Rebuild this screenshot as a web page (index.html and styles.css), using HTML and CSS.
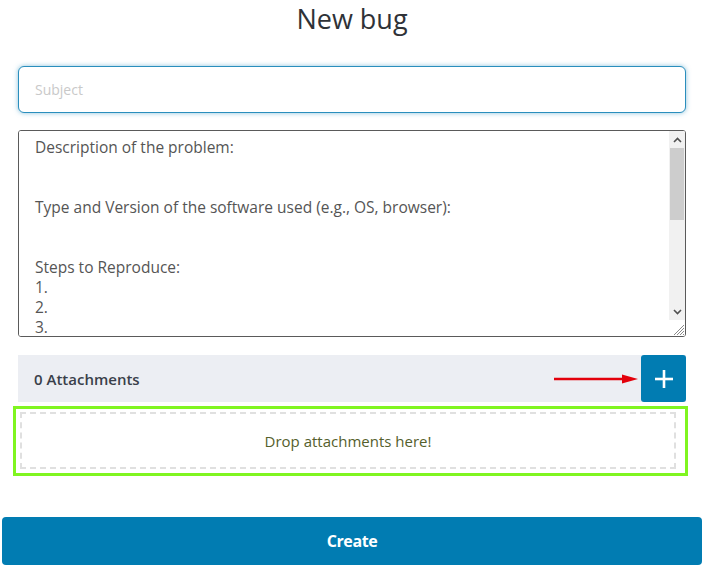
FILE: index.html
```html
<!DOCTYPE html>
<html>
<head>
<meta charset="utf-8">
<link rel="stylesheet" href="styles.css">
</head>
<body>
<div class="modal">
  <h1 class="title">New bug</h1>
  <div class="field">
    <input class="subject" type="text" placeholder="Subject" autofocus>
  </div>
  <div class="field">
    <div class="desc-box">
      <textarea class="desc">Description of the problem:


Type and Version of the software used (e.g., OS, browser):


Steps to Reproduce:
1.
2.
3.


Expected Result:


Actual Result:


Additional Information:

</textarea>
      <div class="scrollbar">
        <div class="sb-btn">
          <svg width="9" height="6" viewBox="0 0 9 6"><polyline points="1,5 4.5,1.5 8,5" fill="none" stroke="#505050" stroke-width="1.6"/></svg>
        </div>
        <div class="sb-track"><div class="sb-thumb"></div></div>
        <div class="sb-btn">
          <svg width="9" height="6" viewBox="0 0 9 6"><polyline points="1,1 4.5,4.5 8,1" fill="none" stroke="#505050" stroke-width="1.6"/></svg>
        </div>
        <div class="sb-corner">
          <svg width="14" height="14" viewBox="0 0 14 14">
            <line x1="13" y1="3" x2="3" y2="13" stroke="#8a8a8a" stroke-width="1"/>
            <line x1="13" y1="6" x2="6" y2="13" stroke="#8a8a8a" stroke-width="1"/>
            <line x1="13" y1="9" x2="9" y2="13" stroke="#8a8a8a" stroke-width="1"/>
            <line x1="13" y1="12" x2="12" y2="13" stroke="#8a8a8a" stroke-width="1"/>
          </svg>
        </div>
      </div>
    </div>
  </div>
  <div class="field">
    <div class="attach-bar">
      <span class="attach-count">0 Attachments</span>
      <div class="attach-actions">
        <svg class="arrow" width="86" height="12" viewBox="0 0 86 12">
          <line x1="0" y1="6" x2="72" y2="6" stroke="#e3000b" stroke-width="2.6" stroke-linecap="round"/>
          <polygon points="68,1.5 84,6 68,10.5" fill="#e3000b"/>
        </svg>
        <button class="add-btn" type="button">
          <svg width="20" height="20" viewBox="0 0 20 20">
            <line x1="10" y1="1" x2="10" y2="19" stroke="#fff" stroke-width="2.6"/>
            <line x1="1" y1="10" x2="19" y2="10" stroke="#fff" stroke-width="2.6"/>
          </svg>
        </button>
      </div>
    </div>
  </div>
  <div class="drop-outline">
    <div class="drop-zone">Drop attachments here!</div>
  </div>
  <button class="create-btn" type="button">Create</button>
</div>
</body>
</html>
```
FILE: styles.css
```css
html, body {
  margin: 0;
  padding: 0;
  background: #ffffff;
}
body {
  font-family: "Open Sans", "DejaVu Sans", sans-serif;
  color: #333;
}
.modal {
  width: 700px;
  margin-left: 2px;
  display: flex;
  flex-direction: column;
}
.title {
  margin: 0;
  height: 40px;
  font-size: 27px;
  font-weight: 400;
  line-height: 38px;
  text-align: center;
  color: #2f3237;
}
.field {
  margin: 0 16px;
}
.subject {
  display: block;
  box-sizing: border-box;
  width: 100%;
  height: 47px;
  margin-top: 26px;
  padding: 0 16px;
  border: 1px solid #2a8ebd;
  border-radius: 6px;
  box-shadow: 0 0 5px rgba(42, 142, 189, 0.55);
  font-family: "Open Sans", sans-serif;
  font-size: 14px;
  color: #555;
  outline: none;
  caret-color: #333;
}
.subject::placeholder {
  color: #c9c9c9;
}
.desc-box {
  box-sizing: border-box;
  height: 207px;
  margin-top: 17px;
  border: 1px solid #5a5a5a;
  border-radius: 3px;
  display: flex;
  overflow: hidden;
  background: #fff;
}
.desc {
  flex: 1;
  display: block;
  box-sizing: border-box;
  height: 100%;
  margin: 0;
  padding: 6px 16px;
  border: none;
  overflow: hidden;
  resize: none;
  font-family: "Open Sans", sans-serif;
  font-size: 15.5px;
  line-height: 20px;
  color: #555;
  outline: none;
}
.scrollbar {
  width: 16px;
  display: flex;
  flex-direction: column;
  background: #fff;
}
.sb-btn {
  height: 17px;
  background: #f1f1f1;
  display: flex;
  align-items: center;
  justify-content: center;
}
.sb-track {
  flex: 1;
  background: #f1f1f1;
  position: relative;
}
.sb-thumb {
  margin: 0 1px;
  margin-top: 0;
  height: 72px;
  background: #cdcdcd;
}
.sb-corner {
  height: 16px;
  background: #fff;
  display: flex;
  align-items: flex-end;
  justify-content: flex-end;
}
.attach-bar {
  margin-top: 18px;
  height: 47px;
  background: #eceef3;
  display: flex;
  align-items: center;
  justify-content: space-between;
  padding-left: 16px;
}
.attach-count {
  font-weight: 600;
  font-size: 15px;
  color: #3a3f4a;
}
.attach-actions {
  display: flex;
  align-items: center;
  height: 100%;
}
.arrow {
  display: block;
  margin-right: 1px;
}
.add-btn {
  width: 45px;
  height: 47px;
  border: none;
  border-radius: 3px;
  background: #017cb2;
  display: flex;
  align-items: center;
  justify-content: center;
  padding: 0;
}
.drop-outline {
  margin: 4px 14px 0 11px;
  border: 3px solid #80f520;
  padding: 3px 9px 4px 4px;
}
.drop-zone {
  height: 53px;
  border: 2px dashed #e0e0e0;
  display: flex;
  align-items: center;
  justify-content: center;
  font-size: 15px;
  color: #55602c;
}
.create-btn {
  margin-top: 41px;
  height: 48px;
  width: 100%;
  border: none;
  border-radius: 4px;
  background: #017cb2;
  color: #fff;
  font-family: "Open Sans", sans-serif;
  font-weight: 700;
  font-size: 16px;
  letter-spacing: -0.4px;
}
```
